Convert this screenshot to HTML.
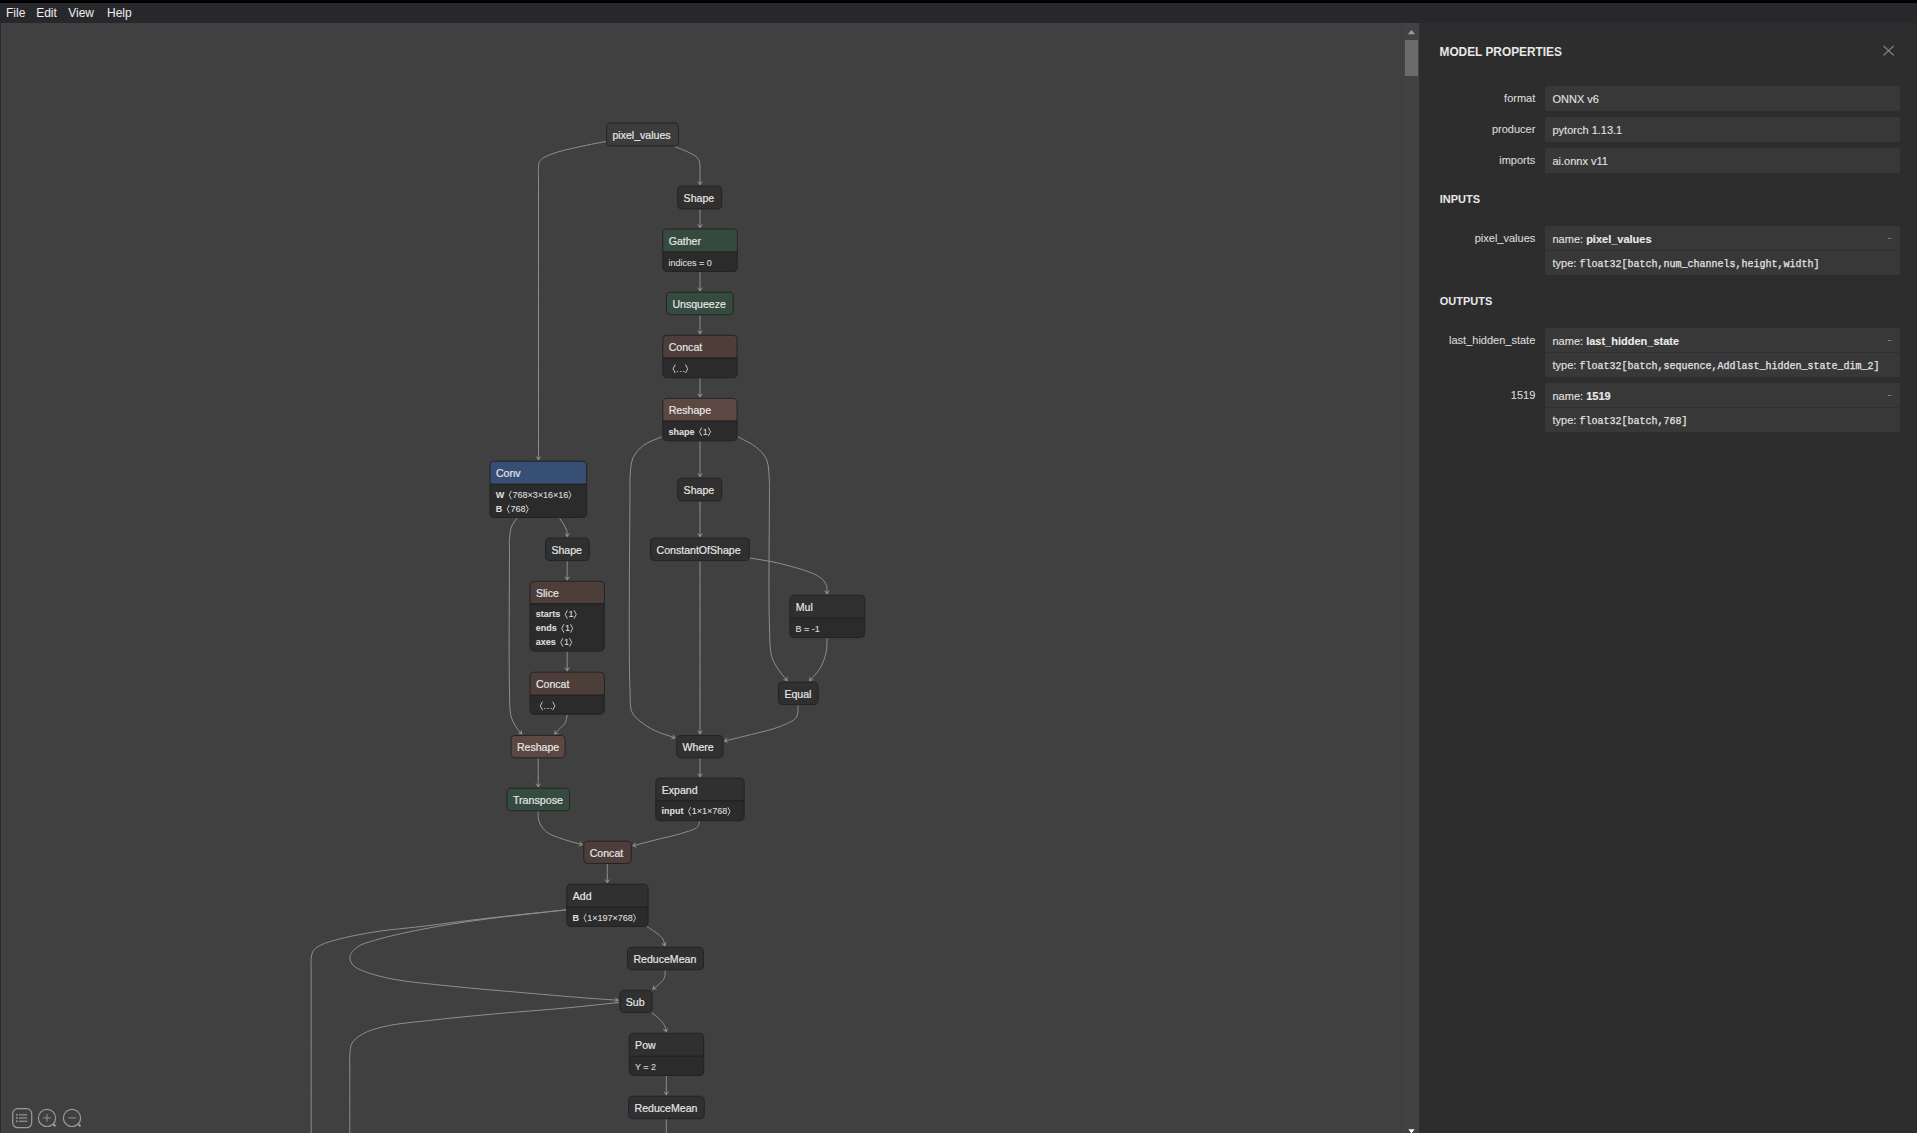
<!DOCTYPE html>
<html><head><meta charset="utf-8">
<style>
html,body{margin:0;padding:0;background:#404040;}
body{width:1917px;height:1133px;overflow:hidden;position:relative;font-family:"Liberation Sans",sans-serif;}
svg{position:absolute;left:0;top:0;}
text{font-family:"Liberation Sans",sans-serif;}
.nl{font-size:11px;fill:#e8e8e8;stroke:#e8e8e8;stroke-width:0.18px;}
.at{font-size:9px;fill:#dcdcdc;stroke:#dcdcdc;stroke-width:0.12px;}
.br{fill:none;stroke:#d4d4d4;stroke-width:0.9;}
.e{fill:none;stroke:#8e8e8e;stroke-width:1;}
.ah{fill:#8e8e8e;}
.mn{font-size:12px;fill:#f0f0f0;}
.st{font-size:12px;font-weight:bold;fill:#e8e8e8;}
.sh{font-size:11px;font-weight:bold;fill:#e8e8e8;}
.lb{font-size:11px;fill:#d8d8d8;stroke:#d8d8d8;stroke-width:0.12px;text-anchor:end;}
.vl{font-size:11px;fill:#e0e0e0;stroke:#e0e0e0;stroke-width:0.12px;}
.vb{font-weight:bold;fill:#ececec;}
.mo{font-family:"Liberation Mono",monospace;font-size:10px;fill:#e4e4e4;stroke:#e4e4e4;stroke-width:0.25px;}
.ex{font-family:"Liberation Mono",monospace;font-size:10px;fill:#8a8a8a;}
</style></head><body>
<svg width="1917" height="1133" viewBox="0 0 1917 1133">
<rect x="0" y="0" width="1917" height="1133" fill="#404040"/>
<g id="edges">
<path d="M606.00,141.50 C599.43,142.77 593.43,143.78 586.30,145.30 C577.75,147.13 565.89,149.48 558.20,151.90 C552.62,153.65 547.38,155.48 544.10,157.50 C542.04,158.77 540.53,159.88 539.60,161.50 C538.70,163.06 538.73,164.70 538.50,167.00 C538.13,170.76 538.50,173.91 538.50,182.00 C538.50,216.18 538.50,423.82 538.50,450.00 C538.50,454.49 538.50,455.27 538.50,457.90" class="e"/>
<path d="M-4.6,-3.0 L0,0 L-4.6,3.0 L-2.8,0 Z" transform="translate(538.50,460.70) rotate(90.00)" class="ah"/>
<path d="M674.10,146.30 C679.27,148.47 685.43,150.64 689.60,152.80 C692.63,154.37 695.44,155.77 697.10,157.50 C698.30,158.75 698.91,160.00 699.40,161.50 C699.93,163.14 699.89,164.94 700.00,167.00 C700.14,169.63 700.00,173.22 700.00,176.00 C700.00,178.40 700.00,180.47 700.00,182.70" class="e"/>
<path d="M-4.6,-3.0 L0,0 L-4.6,3.0 L-2.8,0 Z" transform="translate(700.00,185.50) rotate(90.00)" class="ah"/>
<path d="M700.00,209.50 C700.00,213.00 700.00,217.03 700.00,220.00 C700.00,222.19 700.00,223.80 700.00,225.70" class="e"/>
<path d="M-4.6,-3.0 L0,0 L-4.6,3.0 L-2.8,0 Z" transform="translate(700.00,228.50) rotate(90.00)" class="ah"/>
<path d="M700.00,272.00 C700.00,275.67 700.00,279.90 700.00,283.00 C700.00,285.27 700.00,286.93 700.00,288.90" class="e"/>
<path d="M-4.6,-3.0 L0,0 L-4.6,3.0 L-2.8,0 Z" transform="translate(700.00,291.70) rotate(90.00)" class="ah"/>
<path d="M700.00,315.30 C700.00,318.87 700.00,322.95 700.00,326.00 C700.00,328.29 700.00,330.00 700.00,332.00" class="e"/>
<path d="M-4.6,-3.0 L0,0 L-4.6,3.0 L-2.8,0 Z" transform="translate(700.00,334.80) rotate(90.00)" class="ah"/>
<path d="M700.00,378.30 C700.00,381.87 700.00,385.95 700.00,389.00 C700.00,391.29 700.00,393.00 700.00,395.00" class="e"/>
<path d="M-4.6,-3.0 L0,0 L-4.6,3.0 L-2.8,0 Z" transform="translate(700.00,397.80) rotate(90.00)" class="ah"/>
<path d="M700.00,441.30 C700.00,450.53 700.00,463.20 700.00,469.00 C700.00,471.65 700.00,472.87 700.00,474.80" class="e"/>
<path d="M-4.6,-3.0 L0,0 L-4.6,3.0 L-2.8,0 Z" transform="translate(700.00,477.60) rotate(90.00)" class="ah"/>
<path d="M700.00,501.40 C700.00,510.60 700.00,523.25 700.00,529.00 C700.00,531.61 700.00,532.80 700.00,534.70" class="e"/>
<path d="M-4.6,-3.0 L0,0 L-4.6,3.0 L-2.8,0 Z" transform="translate(700.00,537.50) rotate(90.00)" class="ah"/>
<path d="M700.00,561.20 C700.00,616.13 700.00,708.27 700.00,726.00 C700.00,729.41 700.00,730.07 700.00,732.10" class="e"/>
<path d="M-4.6,-3.0 L0,0 L-4.6,3.0 L-2.8,0 Z" transform="translate(700.00,734.90) rotate(90.00)" class="ah"/>
<path d="M700.00,758.30 C700.00,761.87 700.00,765.96 700.00,769.00 C700.00,771.26 700.00,772.93 700.00,774.90" class="e"/>
<path d="M-4.6,-3.0 L0,0 L-4.6,3.0 L-2.8,0 Z" transform="translate(700.00,777.70) rotate(90.00)" class="ah"/>
<path d="M661.80,436.70 C655.70,439.60 648.43,441.62 643.50,445.40 C639.11,448.77 635.35,452.73 633.10,457.60 C630.66,462.89 630.58,470.53 630.10,476.30 C629.69,481.20 630.03,482.76 630.00,490.00 C629.90,517.66 628.43,656.64 630.00,690.00 C630.52,701.16 629.61,706.69 632.10,712.30 C634.01,716.60 637.43,719.06 641.00,722.00 C645.06,725.34 650.28,728.40 655.50,730.90 C660.99,733.53 667.34,735.14 673.26,737.26" class="e"/>
<path d="M-4.6,-3.0 L0,0 L-4.6,3.0 L-2.8,0 Z" transform="translate(675.90,738.20) rotate(19.69)" class="ah"/>
<path d="M737.80,436.70 C743.93,440.20 751.23,443.07 756.20,447.20 C760.51,450.79 764.28,454.37 766.50,459.40 C769.09,465.28 768.86,474.57 769.30,481.00 C769.65,486.16 769.37,487.97 769.40,495.00 C769.48,516.41 768.36,596.45 769.40,625.00 C769.91,639.05 769.51,648.44 771.70,656.40 C773.16,661.72 775.56,665.13 778.00,669.00 C780.34,672.71 783.32,675.80 785.97,679.19" class="e"/>
<path d="M-4.6,-3.0 L0,0 L-4.6,3.0 L-2.8,0 Z" transform="translate(787.70,681.40) rotate(51.97)" class="ah"/>
<path d="M749.50,558.00 C756.10,559.07 762.55,559.86 769.30,561.20 C776.47,562.62 784.01,564.33 791.30,566.40 C798.68,568.49 807.60,571.03 813.30,573.70 C817.26,575.55 820.50,577.18 822.80,579.60 C824.78,581.69 826.18,584.61 826.80,586.90 C827.28,588.69 826.89,590.30 826.93,592.00" class="e"/>
<path d="M-4.6,-3.0 L0,0 L-4.6,3.0 L-2.8,0 Z" transform="translate(827.00,594.80) rotate(88.55)" class="ah"/>
<path d="M827.10,638.30 C826.80,642.80 827.17,647.17 826.20,651.80 C825.11,657.00 823.11,663.21 820.40,667.90 C817.88,672.27 814.00,675.47 810.81,679.26" class="e"/>
<path d="M-4.6,-3.0 L0,0 L-4.6,3.0 L-2.8,0 Z" transform="translate(809.00,681.40) rotate(130.18)" class="ah"/>
<path d="M798.10,705.30 C797.53,709.27 798.64,713.90 796.40,717.20 C793.62,721.30 786.63,723.76 780.30,726.40 C772.28,729.75 760.89,731.96 751.60,734.40 C742.90,736.68 734.68,738.55 726.22,740.63" class="e"/>
<path d="M-4.6,-3.0 L0,0 L-4.6,3.0 L-2.8,0 Z" transform="translate(723.50,741.30) rotate(166.20)" class="ah"/>
<path d="M699.60,821.30 C698.90,823.20 699.12,825.34 697.50,827.00 C694.76,829.81 687.47,831.44 681.40,833.40 C673.86,835.83 663.64,837.82 655.50,839.90 C648.21,841.76 641.71,843.50 634.81,845.29" class="e"/>
<path d="M-4.6,-3.0 L0,0 L-4.6,3.0 L-2.8,0 Z" transform="translate(632.10,846.00) rotate(165.39)" class="ah"/>
<path d="M517.00,518.20 C515.27,520.80 513.04,522.95 511.80,526.00 C510.36,529.55 509.87,534.40 509.50,538.50 C509.14,542.40 509.50,544.04 509.50,550.00 C509.50,570.79 508.73,662.13 509.50,690.00 C509.83,701.88 509.34,708.77 510.90,715.40 C511.98,719.97 513.87,723.45 515.70,726.50 C517.17,728.95 518.94,730.57 520.56,732.61" class="e"/>
<path d="M-4.6,-3.0 L0,0 L-4.6,3.0 L-2.8,0 Z" transform="translate(522.30,734.80) rotate(51.51)" class="ah"/>
<path d="M559.70,518.40 C561.33,520.93 563.32,523.56 564.60,526.00 C565.69,528.07 566.76,530.37 567.10,532.00 C567.32,533.05 567.13,533.80 567.15,534.70" class="e"/>
<path d="M-4.6,-3.0 L0,0 L-4.6,3.0 L-2.8,0 Z" transform="translate(567.20,537.50) rotate(88.96)" class="ah"/>
<path d="M567.20,561.20 C567.20,564.80 567.20,568.93 567.20,572.00 C567.20,574.29 567.20,576.00 567.20,578.00" class="e"/>
<path d="M-4.6,-3.0 L0,0 L-4.6,3.0 L-2.8,0 Z" transform="translate(567.20,580.80) rotate(90.00)" class="ah"/>
<path d="M567.20,651.60 C567.20,655.40 567.20,659.82 567.20,663.00 C567.20,665.29 567.20,666.93 567.20,668.90" class="e"/>
<path d="M-4.6,-3.0 L0,0 L-4.6,3.0 L-2.8,0 Z" transform="translate(567.20,671.70) rotate(90.00)" class="ah"/>
<path d="M567.30,714.90 C566.50,717.73 566.34,720.94 564.90,723.40 C563.45,725.87 560.23,727.96 558.60,729.70 C557.51,730.86 556.84,731.70 555.95,732.70" class="e"/>
<path d="M-4.6,-3.0 L0,0 L-4.6,3.0 L-2.8,0 Z" transform="translate(554.10,734.80) rotate(131.42)" class="ah"/>
<path d="M538.20,758.30 C538.20,765.20 538.20,774.20 538.20,779.00 C538.20,781.56 538.20,782.93 538.20,784.90" class="e"/>
<path d="M-4.6,-3.0 L0,0 L-4.6,3.0 L-2.8,0 Z" transform="translate(538.20,787.70) rotate(90.00)" class="ah"/>
<path d="M538.20,811.30 C538.37,814.30 537.72,817.27 538.70,820.30 C539.88,823.96 542.32,828.39 545.80,831.40 C550.01,835.04 557.41,837.16 563.30,839.30 C568.98,841.37 574.77,842.53 580.50,844.14" class="e"/>
<path d="M-4.6,-3.0 L0,0 L-4.6,3.0 L-2.8,0 Z" transform="translate(583.20,844.90) rotate(15.72)" class="ah"/>
<path d="M607.30,864.00 C607.30,867.67 607.30,871.92 607.30,875.00 C607.30,877.24 607.30,878.87 607.30,880.80" class="e"/>
<path d="M-4.6,-3.0 L0,0 L-4.6,3.0 L-2.8,0 Z" transform="translate(607.30,883.60) rotate(90.00)" class="ah"/>
<path d="M566.30,909.80 C538.03,912.83 507.37,915.89 481.50,918.90 C459.62,921.45 439.22,924.33 421.00,926.50 C406.01,928.28 392.23,929.33 380.00,931.10 C370.01,932.54 360.70,934.30 352.90,935.90 C346.91,937.13 342.34,938.12 337.10,939.60 C331.77,941.11 325.38,942.77 321.20,944.90 C318.12,946.47 315.46,948.02 313.80,950.20 C312.32,952.14 311.79,954.32 311.30,957.00 C310.65,960.59 311.23,963.21 311.20,970.00 C311.11,994.55 311.20,1083.33 311.20,1140.00" class="e"/>
<path d="M566.30,909.80 C538.03,913.10 507.35,916.10 481.50,919.70 C459.60,922.75 439.66,925.81 421.00,929.50 C404.72,932.71 387.23,936.57 375.60,940.10 C368.11,942.37 361.94,943.63 357.50,946.90 C353.94,949.52 350.41,953.42 349.90,956.70 C349.47,959.49 351.05,962.80 353.00,965.10 C355.26,967.77 359.03,969.24 363.50,971.10 C370.34,973.95 379.82,976.50 390.80,978.70 C406.91,981.92 429.99,983.92 451.30,986.20 C475.08,988.74 502.83,990.91 526.90,993.00 C548.88,994.91 573.49,997.04 590.00,998.30 C600.65,999.11 607.54,999.51 616.31,1000.11" class="e"/>
<path d="M-4.6,-3.0 L0,0 L-4.6,3.0 L-2.8,0 Z" transform="translate(619.10,1000.30) rotate(3.93)" class="ah"/>
<path d="M646.90,926.60 C650.43,928.97 654.62,931.33 657.50,933.70 C659.77,935.57 661.96,937.35 663.10,939.30 C664.01,940.85 664.00,942.50 664.45,944.10" class="e"/>
<path d="M-4.6,-3.0 L0,0 L-4.6,3.0 L-2.8,0 Z" transform="translate(665.20,946.80) rotate(74.36)" class="ah"/>
<path d="M665.20,970.40 C664.97,972.77 665.33,975.38 664.50,977.50 C663.68,979.60 661.95,981.38 660.30,983.10 C658.56,984.91 656.28,986.39 654.27,988.03" class="e"/>
<path d="M-4.6,-3.0 L0,0 L-4.6,3.0 L-2.8,0 Z" transform="translate(652.10,989.80) rotate(140.75)" class="ah"/>
<path d="M619.10,1002.50 C601.70,1004.30 585.92,1006.12 566.90,1007.90 C544.04,1010.04 515.09,1012.01 491.30,1014.20 C470.00,1016.16 449.51,1018.12 430.80,1020.30 C414.57,1022.19 397.82,1023.43 385.40,1026.30 C376.42,1028.38 368.60,1030.55 362.70,1033.90 C358.19,1036.46 354.20,1039.41 352.10,1043.00 C350.22,1046.22 350.30,1050.09 349.90,1054.00 C349.45,1058.37 349.82,1061.52 349.80,1068.00 C349.75,1082.69 349.80,1116.00 349.80,1140.00" class="e"/>
<path d="M651.80,1012.80 C654.63,1015.13 657.99,1017.29 660.30,1019.80 C662.34,1022.03 664.38,1024.93 665.20,1026.90 C665.70,1028.10 665.59,1029.00 665.79,1030.05" class="e"/>
<path d="M-4.6,-3.0 L0,0 L-4.6,3.0 L-2.8,0 Z" transform="translate(666.30,1032.80) rotate(79.44)" class="ah"/>
<path d="M666.30,1076.00 C666.30,1079.67 666.30,1083.90 666.30,1087.00 C666.30,1089.27 666.30,1090.93 666.30,1092.90" class="e"/>
<path d="M-4.6,-3.0 L0,0 L-4.6,3.0 L-2.8,0 Z" transform="translate(666.30,1095.70) rotate(90.00)" class="ah"/>
<path d="M666.30,1119.20 L666.30,1140.00" class="e"/>
</g>
<g id="nodes">
<path d="M611,123 L674,123 Q678.5,123 678.5,127.5 L678.5,141.5 Q678.5,146 674,146 L611,146 Q606.5,146 606.5,141.5 L606.5,127.5 Q606.5,123 611,123 Z" fill="#3c3c3c" stroke="#232323"/>
<text x="612.40" y="139.00" class="nl" textLength="58.24" lengthAdjust="spacingAndGlyphs">pixel_values</text>
<path d="M682.2,186 L717.2,186 Q721.7,186 721.7,190.5 L721.7,204.5 Q721.7,209 717.2,209 L682.2,209 Q677.7,209 677.7,204.5 L677.7,190.5 Q677.7,186 682.2,186 Z" fill="#303030" stroke="#232323"/>
<text x="683.60" y="202.00" class="nl" textLength="30.60" lengthAdjust="spacingAndGlyphs">Shape</text>
<path d="M667.3,229 L732.8,229 Q737.3,229 737.3,233.5 L737.3,252 L662.8,252 L662.8,233.5 Q662.8,229 667.3,229 Z" fill="#364b40"/>
<path d="M662.8,252 L737.3,252 L737.3,267 Q737.3,271.5 732.8,271.5 L667.3,271.5 Q662.8,271.5 662.8,267 L662.8,252 Z" fill="#2b2b2b"/>
<path d="M667.3,229 L732.8,229 Q737.3,229 737.3,233.5 L737.3,267 Q737.3,271.5 732.8,271.5 L667.3,271.5 Q662.8,271.5 662.8,267 L662.8,233.5 Q662.8,229 667.3,229 Z" fill="none" stroke="#232323"/>
<line x1="662.8" y1="252.0" x2="737.3" y2="252.0" stroke="#232323" stroke-width="1.6"/>
<text x="668.70" y="245.00" class="nl" textLength="32.35" lengthAdjust="spacingAndGlyphs">Gather</text>
<g transform="translate(668.50,265.50)">
<text x="0.00" y="0" class="at">indices = 0</text>
</g>
<path d="M671,292.2 L728.7,292.2 Q733.2,292.2 733.2,296.7 L733.2,310.3 Q733.2,314.8 728.7,314.8 L671,314.8 Q666.5,314.8 666.5,310.3 L666.5,296.7 Q666.5,292.2 671,292.2 Z" fill="#364b40" stroke="#232323"/>
<text x="672.40" y="308.20" class="nl" textLength="53.54" lengthAdjust="spacingAndGlyphs">Unsqueeze</text>
<path d="M667.3,335.3 L732.6,335.3 Q737.1,335.3 737.1,339.8 L737.1,358.1 L662.8,358.1 L662.8,339.8 Q662.8,335.3 667.3,335.3 Z" fill="#4d3e3a"/>
<path d="M662.8,358.1 L737.1,358.1 L737.1,373.3 Q737.1,377.8 732.6,377.8 L667.3,377.8 Q662.8,377.8 662.8,373.3 L662.8,358.1 Z" fill="#2b2b2b"/>
<path d="M667.3,335.3 L732.6,335.3 Q737.1,335.3 737.1,339.8 L737.1,373.3 Q737.1,377.8 732.6,377.8 L667.3,377.8 Q662.8,377.8 662.8,373.3 L662.8,339.8 Q662.8,335.3 667.3,335.3 Z" fill="none" stroke="#232323"/>
<line x1="662.8" y1="358.1" x2="737.1" y2="358.1" stroke="#232323" stroke-width="1.6"/>
<text x="668.70" y="351.30" class="nl" textLength="33.53" lengthAdjust="spacingAndGlyphs">Concat</text>
<g transform="translate(668.50,371.60)">
<path d="M6.80,-7 L4.60,-2.8 L6.80,1.4" class="br"/>
<text x="7.80" y="0" class="at" letter-spacing="0.6">...</text>
<path d="M17.00,-7 L19.20,-2.8 L17.00,1.4" class="br"/>
</g>
<path d="M667.3,398.3 L732.6,398.3 Q737.1,398.3 737.1,402.8 L737.1,421.1 L662.8,421.1 L662.8,402.8 Q662.8,398.3 667.3,398.3 Z" fill="#5b4843"/>
<path d="M662.8,421.1 L737.1,421.1 L737.1,436.3 Q737.1,440.8 732.6,440.8 L667.3,440.8 Q662.8,440.8 662.8,436.3 L662.8,421.1 Z" fill="#2b2b2b"/>
<path d="M667.3,398.3 L732.6,398.3 Q737.1,398.3 737.1,402.8 L737.1,436.3 Q737.1,440.8 732.6,440.8 L667.3,440.8 Q662.8,440.8 662.8,436.3 L662.8,402.8 Q662.8,398.3 667.3,398.3 Z" fill="none" stroke="#232323"/>
<line x1="662.8" y1="421.1" x2="737.1" y2="421.1" stroke="#232323" stroke-width="1.6"/>
<text x="668.70" y="414.30" class="nl" textLength="42.36" lengthAdjust="spacingAndGlyphs">Reshape</text>
<g transform="translate(668.50,434.60)">
<text x="0" y="0" class="at"><tspan font-weight="bold">shape</tspan></text>
<path d="M33.21,-7 L31.01,-2.8 L33.21,1.4" class="br"/>
<text x="34.21" y="0" class="at">1</text>
<path d="M39.82,-7 L42.02,-2.8 L39.82,1.4" class="br"/>
</g>
<path d="M494.5,461.2 L582.2,461.2 Q586.7,461.2 586.7,465.7 L586.7,484.3 L490,484.3 L490,465.7 Q490,461.2 494.5,461.2 Z" fill="#384f75"/>
<path d="M490,484.3 L586.7,484.3 L586.7,513 Q586.7,517.5 582.2,517.5 L494.5,517.5 Q490,517.5 490,513 L490,484.3 Z" fill="#2b2b2b"/>
<path d="M494.5,461.2 L582.2,461.2 Q586.7,461.2 586.7,465.7 L586.7,513 Q586.7,517.5 582.2,517.5 L494.5,517.5 Q490,517.5 490,513 L490,465.7 Q490,461.2 494.5,461.2 Z" fill="none" stroke="#232323"/>
<line x1="490.0" y1="484.3" x2="586.7" y2="484.3" stroke="#232323" stroke-width="1.6"/>
<text x="495.90" y="477.20" class="nl" textLength="24.70" lengthAdjust="spacingAndGlyphs">Conv</text>
<g transform="translate(495.70,497.80)">
<text x="0" y="0" class="at"><tspan font-weight="bold">W</tspan></text>
<path d="M15.69,-7 L13.49,-2.8 L15.69,1.4" class="br"/>
<text x="16.69" y="0" class="at">768×3×16×16</text>
<path d="M73.11,-7 L75.31,-2.8 L73.11,1.4" class="br"/>
</g>
<g transform="translate(495.70,511.80)">
<text x="0" y="0" class="at"><tspan font-weight="bold">B</tspan></text>
<path d="M13.70,-7 L11.50,-2.8 L13.70,1.4" class="br"/>
<text x="14.70" y="0" class="at">768</text>
<path d="M30.32,-7 L32.52,-2.8 L30.32,1.4" class="br"/>
</g>
<path d="M682.2,478.1 L717.2,478.1 Q721.7,478.1 721.7,482.6 L721.7,496.4 Q721.7,500.9 717.2,500.9 L682.2,500.9 Q677.7,500.9 677.7,496.4 L677.7,482.6 Q677.7,478.1 682.2,478.1 Z" fill="#303030" stroke="#232323"/>
<text x="683.60" y="494.10" class="nl" textLength="30.60" lengthAdjust="spacingAndGlyphs">Shape</text>
<path d="M550,538 L584.7,538 Q589.2,538 589.2,542.5 L589.2,556.2 Q589.2,560.7 584.7,560.7 L550,560.7 Q545.5,560.7 545.5,556.2 L545.5,542.5 Q545.5,538 550,538 Z" fill="#303030" stroke="#232323"/>
<text x="551.40" y="554.00" class="nl" textLength="30.60" lengthAdjust="spacingAndGlyphs">Shape</text>
<path d="M655.1,538 L744.9,538 Q749.4,538 749.4,542.5 L749.4,556.2 Q749.4,560.7 744.9,560.7 L655.1,560.7 Q650.6,560.7 650.6,556.2 L650.6,542.5 Q650.6,538 655.1,538 Z" fill="#303030" stroke="#232323"/>
<text x="656.50" y="554.00" class="nl" textLength="84.12" lengthAdjust="spacingAndGlyphs">ConstantOfShape</text>
<path d="M534.5,581.3 L599.9,581.3 Q604.4,581.3 604.4,585.8 L604.4,603.7 L530,603.7 L530,585.8 Q530,581.3 534.5,581.3 Z" fill="#4d3e3a"/>
<path d="M530,603.7 L604.4,603.7 L604.4,646.6 Q604.4,651.1 599.9,651.1 L534.5,651.1 Q530,651.1 530,646.6 L530,603.7 Z" fill="#2b2b2b"/>
<path d="M534.5,581.3 L599.9,581.3 Q604.4,581.3 604.4,585.8 L604.4,646.6 Q604.4,651.1 599.9,651.1 L534.5,651.1 Q530,651.1 530,646.6 L530,585.8 Q530,581.3 534.5,581.3 Z" fill="none" stroke="#232323"/>
<line x1="530.0" y1="603.7" x2="604.4" y2="603.7" stroke="#232323" stroke-width="1.6"/>
<text x="535.90" y="597.30" class="nl" textLength="22.94" lengthAdjust="spacingAndGlyphs">Slice</text>
<g transform="translate(535.70,617.20)">
<text x="0" y="0" class="at"><tspan font-weight="bold">starts</tspan></text>
<path d="M31.71,-7 L29.51,-2.8 L31.71,1.4" class="br"/>
<text x="32.71" y="0" class="at">1</text>
<path d="M38.32,-7 L40.52,-2.8 L38.32,1.4" class="br"/>
</g>
<g transform="translate(535.70,631.20)">
<text x="0" y="0" class="at"><tspan font-weight="bold">ends</tspan></text>
<path d="M28.21,-7 L26.01,-2.8 L28.21,1.4" class="br"/>
<text x="29.21" y="0" class="at">1</text>
<path d="M34.81,-7 L37.01,-2.8 L34.81,1.4" class="br"/>
</g>
<g transform="translate(535.70,645.20)">
<text x="0" y="0" class="at"><tspan font-weight="bold">axes</tspan></text>
<path d="M27.22,-7 L25.02,-2.8 L27.22,1.4" class="br"/>
<text x="28.22" y="0" class="at">1</text>
<path d="M33.83,-7 L36.03,-2.8 L33.83,1.4" class="br"/>
</g>
<path d="M794.4,595.3 L860.2,595.3 Q864.7,595.3 864.7,599.8 L864.7,618 L789.9,618 L789.9,599.8 Q789.9,595.3 794.4,595.3 Z" fill="#303030"/>
<path d="M789.9,618 L864.7,618 L864.7,633.1 Q864.7,637.6 860.2,637.6 L794.4,637.6 Q789.9,637.6 789.9,633.1 L789.9,618 Z" fill="#2b2b2b"/>
<path d="M794.4,595.3 L860.2,595.3 Q864.7,595.3 864.7,599.8 L864.7,633.1 Q864.7,637.6 860.2,637.6 L794.4,637.6 Q789.9,637.6 789.9,633.1 L789.9,599.8 Q789.9,595.3 794.4,595.3 Z" fill="none" stroke="#232323"/>
<line x1="789.9" y1="618.0" x2="864.7" y2="618.0" stroke="#232323" stroke-width="1.6"/>
<text x="795.80" y="611.30" class="nl" textLength="17.05" lengthAdjust="spacingAndGlyphs">Mul</text>
<g transform="translate(795.60,631.50)">
<text x="0.00" y="0" class="at">B = -1</text>
</g>
<path d="M534.5,672.2 L599.9,672.2 Q604.4,672.2 604.4,676.7 L604.4,695.2 L530,695.2 L530,676.7 Q530,672.2 534.5,672.2 Z" fill="#4d3e3a"/>
<path d="M530,695.2 L604.4,695.2 L604.4,709.7 Q604.4,714.2 599.9,714.2 L534.5,714.2 Q530,714.2 530,709.7 L530,695.2 Z" fill="#2b2b2b"/>
<path d="M534.5,672.2 L599.9,672.2 Q604.4,672.2 604.4,676.7 L604.4,709.7 Q604.4,714.2 599.9,714.2 L534.5,714.2 Q530,714.2 530,709.7 L530,676.7 Q530,672.2 534.5,672.2 Z" fill="none" stroke="#232323"/>
<line x1="530.0" y1="695.2" x2="604.4" y2="695.2" stroke="#232323" stroke-width="1.6"/>
<text x="535.90" y="688.20" class="nl" textLength="33.53" lengthAdjust="spacingAndGlyphs">Concat</text>
<g transform="translate(535.70,708.70)">
<path d="M6.80,-7 L4.60,-2.8 L6.80,1.4" class="br"/>
<text x="7.80" y="0" class="at" letter-spacing="0.6">...</text>
<path d="M17.00,-7 L19.20,-2.8 L17.00,1.4" class="br"/>
</g>
<path d="M783,682.1 L813.6,682.1 Q818.1,682.1 818.1,686.6 L818.1,700.1 Q818.1,704.6 813.6,704.6 L783,704.6 Q778.5,704.6 778.5,700.1 L778.5,686.6 Q778.5,682.1 783,682.1 Z" fill="#303030" stroke="#232323"/>
<text x="784.40" y="698.10" class="nl" textLength="27.06" lengthAdjust="spacingAndGlyphs">Equal</text>
<path d="M515.5,735.4 L560.6,735.4 Q565.1,735.4 565.1,739.9 L565.1,753.3 Q565.1,757.8 560.6,757.8 L515.5,757.8 Q511,757.8 511,753.3 L511,739.9 Q511,735.4 515.5,735.4 Z" fill="#5b4843" stroke="#232323"/>
<text x="516.90" y="751.40" class="nl" textLength="42.36" lengthAdjust="spacingAndGlyphs">Reshape</text>
<path d="M681.2,735.4 L718.5,735.4 Q723,735.4 723,739.9 L723,753.3 Q723,757.8 718.5,757.8 L681.2,757.8 Q676.7,757.8 676.7,753.3 L676.7,739.9 Q676.7,735.4 681.2,735.4 Z" fill="#303030" stroke="#232323"/>
<text x="682.60" y="751.40" class="nl" textLength="31.17" lengthAdjust="spacingAndGlyphs">Where</text>
<path d="M511.5,788.2 L565.2,788.2 Q569.7,788.2 569.7,792.7 L569.7,806.3 Q569.7,810.8 565.2,810.8 L511.5,810.8 Q507,810.8 507,806.3 L507,792.7 Q507,788.2 511.5,788.2 Z" fill="#364b40" stroke="#232323"/>
<text x="512.90" y="804.20" class="nl" textLength="50.00" lengthAdjust="spacingAndGlyphs">Transpose</text>
<path d="M660.3,778.2 L739.7,778.2 Q744.2,778.2 744.2,782.7 L744.2,800.7 L655.8,800.7 L655.8,782.7 Q655.8,778.2 660.3,778.2 Z" fill="#303030"/>
<path d="M655.8,800.7 L744.2,800.7 L744.2,816.2 Q744.2,820.7 739.7,820.7 L660.3,820.7 Q655.8,820.7 655.8,816.2 L655.8,800.7 Z" fill="#2b2b2b"/>
<path d="M660.3,778.2 L739.7,778.2 Q744.2,778.2 744.2,782.7 L744.2,816.2 Q744.2,820.7 739.7,820.7 L660.3,820.7 Q655.8,820.7 655.8,816.2 L655.8,782.7 Q655.8,778.2 660.3,778.2 Z" fill="none" stroke="#232323"/>
<line x1="655.8" y1="800.7" x2="744.2" y2="800.7" stroke="#232323" stroke-width="1.6"/>
<text x="661.70" y="794.20" class="nl" textLength="35.89" lengthAdjust="spacingAndGlyphs">Expand</text>
<g transform="translate(661.50,814.20)">
<text x="0" y="0" class="at"><tspan font-weight="bold">input</tspan></text>
<path d="M29.19,-7 L26.99,-2.8 L29.19,1.4" class="br"/>
<text x="30.19" y="0" class="at">1×1×768</text>
<path d="M66.33,-7 L68.53,-2.8 L66.33,1.4" class="br"/>
</g>
<path d="M588.3,841.2 L626.7,841.2 Q631.2,841.2 631.2,845.7 L631.2,859 Q631.2,863.5 626.7,863.5 L588.3,863.5 Q583.8,863.5 583.8,859 L583.8,845.7 Q583.8,841.2 588.3,841.2 Z" fill="#4d3e3a" stroke="#232323"/>
<text x="589.70" y="857.20" class="nl" textLength="33.53" lengthAdjust="spacingAndGlyphs">Concat</text>
<path d="M571.3,884.1 L643.6,884.1 Q648.1,884.1 648.1,888.6 L648.1,907.3 L566.8,907.3 L566.8,888.6 Q566.8,884.1 571.3,884.1 Z" fill="#303030"/>
<path d="M566.8,907.3 L648.1,907.3 L648.1,922 Q648.1,926.5 643.6,926.5 L571.3,926.5 Q566.8,926.5 566.8,922 L566.8,907.3 Z" fill="#2b2b2b"/>
<path d="M571.3,884.1 L643.6,884.1 Q648.1,884.1 648.1,888.6 L648.1,922 Q648.1,926.5 643.6,926.5 L571.3,926.5 Q566.8,926.5 566.8,922 L566.8,888.6 Q566.8,884.1 571.3,884.1 Z" fill="none" stroke="#232323"/>
<line x1="566.8" y1="907.3" x2="648.1" y2="907.3" stroke="#232323" stroke-width="1.6"/>
<text x="572.70" y="900.10" class="nl" textLength="18.83" lengthAdjust="spacingAndGlyphs">Add</text>
<g transform="translate(572.50,920.80)">
<text x="0" y="0" class="at"><tspan font-weight="bold">B</tspan></text>
<path d="M13.70,-7 L11.50,-2.8 L13.70,1.4" class="br"/>
<text x="14.70" y="0" class="at">1×197×768</text>
<path d="M60.85,-7 L63.05,-2.8 L60.85,1.4" class="br"/>
</g>
<path d="M632,947.3 L699,947.3 Q703.5,947.3 703.5,951.8 L703.5,965.2 Q703.5,969.7 699,969.7 L632,969.7 Q627.5,969.7 627.5,965.2 L627.5,951.8 Q627.5,947.3 632,947.3 Z" fill="#303030" stroke="#232323"/>
<text x="633.40" y="963.30" class="nl" textLength="62.94" lengthAdjust="spacingAndGlyphs">ReduceMean</text>
<path d="M624.4,990.3 L647.7,990.3 Q652.2,990.3 652.2,994.8 L652.2,1008 Q652.2,1012.5 647.7,1012.5 L624.4,1012.5 Q619.9,1012.5 619.9,1008 L619.9,994.8 Q619.9,990.3 624.4,990.3 Z" fill="#303030" stroke="#232323"/>
<text x="625.80" y="1006.30" class="nl" textLength="18.83" lengthAdjust="spacingAndGlyphs">Sub</text>
<path d="M633.7,1033.3 L699.2,1033.3 Q703.7,1033.3 703.7,1037.8 L703.7,1056.2 L629.2,1056.2 L629.2,1037.8 Q629.2,1033.3 633.7,1033.3 Z" fill="#303030"/>
<path d="M629.2,1056.2 L703.7,1056.2 L703.7,1071 Q703.7,1075.5 699.2,1075.5 L633.7,1075.5 Q629.2,1075.5 629.2,1071 L629.2,1056.2 Z" fill="#2b2b2b"/>
<path d="M633.7,1033.3 L699.2,1033.3 Q703.7,1033.3 703.7,1037.8 L703.7,1071 Q703.7,1075.5 699.2,1075.5 L633.7,1075.5 Q629.2,1075.5 629.2,1071 L629.2,1037.8 Q629.2,1033.3 633.7,1033.3 Z" fill="none" stroke="#232323"/>
<line x1="629.2" y1="1056.2" x2="703.7" y2="1056.2" stroke="#232323" stroke-width="1.6"/>
<text x="635.10" y="1049.30" class="nl" textLength="20.59" lengthAdjust="spacingAndGlyphs">Pow</text>
<g transform="translate(634.90,1069.70)">
<text x="0.00" y="0" class="at">Y = 2</text>
</g>
<path d="M633.1,1096.2 L699.8,1096.2 Q704.3,1096.2 704.3,1100.7 L704.3,1114.2 Q704.3,1118.7 699.8,1118.7 L633.1,1118.7 Q628.6,1118.7 628.6,1114.2 L628.6,1100.7 Q628.6,1096.2 633.1,1096.2 Z" fill="#303030" stroke="#232323"/>
<text x="634.50" y="1112.20" class="nl" textLength="62.94" lengthAdjust="spacingAndGlyphs">ReduceMean</text>
</g>
<rect x="0" y="23" width="1" height="1110" fill="#2a2a2a"/>
<rect x="0" y="0" width="1917" height="3" fill="#000"/>
<rect x="0" y="3" width="1917" height="20" fill="#27282c"/>
<text x="6" y="17" class="mn">File</text>
<text x="36.2" y="17" class="mn">Edit</text>
<text x="68.2" y="17" class="mn">View</text>
<text x="107" y="17" class="mn">Help</text>

<rect x="1403" y="23" width="16" height="1110" fill="#424242"/>
<rect x="1405" y="40" width="13" height="36" fill="#6b6b6b"/>
<path d="M7.8,34.2 L11.45,29.9 L15.1,34.2 Z" transform="translate(1400,0)" fill="#9a9a9a"/>
<path d="M1407.6,1128.8 L1415.4,1128.8 L1411.5,1134 Z" fill="#ffffff" stroke="#1a1a1a" stroke-width="0.7"/>

<g transform="translate(8,1104)">
 <rect x="4.7" y="4.7" width="19" height="19" rx="5" fill="none" stroke="#9a9a9a" stroke-width="1.2"/>
 <rect x="8" y="9.9" width="1.8" height="1.8" fill="#8a8a8a"/><rect x="11" y="10.1" width="8.2" height="1.4" fill="#8a8a8a"/>
 <rect x="8" y="13.1" width="1.8" height="1.8" fill="#8a8a8a"/><rect x="11" y="13.3" width="8.2" height="1.4" fill="#8a8a8a"/>
 <rect x="8" y="16.4" width="1.8" height="1.8" fill="#8a8a8a"/><rect x="11" y="16.6" width="8.2" height="1.4" fill="#8a8a8a"/>
 <circle cx="39" cy="13.9" r="8.6" fill="none" stroke="#9a9a9a" stroke-width="1.2"/>
 <line x1="35.2" y1="13.9" x2="43" y2="13.9" stroke="#8a8a8a" stroke-width="1.1"/><line x1="39" y1="10.1" x2="39" y2="17.7" stroke="#8a8a8a" stroke-width="1.1"/>
 <line x1="45" y1="20" x2="47.5" y2="22.3" stroke="#9a9a9a" stroke-width="2"/>
 <circle cx="64" cy="13.9" r="8.6" fill="none" stroke="#9a9a9a" stroke-width="1.2"/>
 <line x1="60.2" y1="13.9" x2="68" y2="13.9" stroke="#8a8a8a" stroke-width="1.1"/>
 <line x1="70" y1="20" x2="72.5" y2="22.3" stroke="#9a9a9a" stroke-width="2"/>
</g>

<rect x="1419" y="23" width="498" height="1110" fill="#2d2d2d"/>
<text x="1439.5" y="56.2" class="st" textLength="122.4" lengthAdjust="spacingAndGlyphs">MODEL PROPERTIES</text>
<path d="M1883.5,45.8 L1893.8,55.3 M1893.8,45.8 L1883.5,55.3" stroke="#8c8c8c" stroke-width="1.15"/>

<text x="1535.3" y="102" class="lb">format</text>
<rect x="1545" y="86" width="355" height="25" rx="2" fill="#383838"/>
<text x="1552.5" y="102.8" class="vl">ONNX v6</text>
<text x="1535.3" y="133" class="lb">producer</text>
<rect x="1545" y="117" width="355" height="25" rx="2" fill="#383838"/>
<text x="1552.5" y="133.8" class="vl">pytorch 1.13.1</text>
<text x="1535.3" y="164" class="lb">imports</text>
<rect x="1545" y="148" width="355" height="25" rx="2" fill="#383838"/>
<text x="1552.5" y="164.8" class="vl">ai.onnx v11</text>

<text x="1439.7" y="202.9" class="sh">INPUTS</text>
<text x="1535.3" y="241.9" class="lb">pixel_values</text>
<rect x="1545" y="226" width="355" height="49" rx="2" fill="#383838"/>
<rect x="1545" y="250" width="355" height="1" fill="#303030"/>
<text x="1552.5" y="242.5" class="vl">name: <tspan class="vb">pixel_values</tspan></text>
<text x="1886.5" y="240.5" class="ex">-</text>
<text x="1552.5" y="266.5" class="vl">type: <tspan class="mo">float32[batch,num_channels,height,width]</tspan></text>

<text x="1439.7" y="304.9" class="sh">OUTPUTS</text>
<text x="1535.3" y="343.9" class="lb">last_hidden_state</text>
<rect x="1545" y="328" width="355" height="49" rx="2" fill="#383838"/>
<rect x="1545" y="352" width="355" height="1" fill="#303030"/>
<text x="1552.5" y="344.5" class="vl">name: <tspan class="vb">last_hidden_state</tspan></text>
<text x="1886.5" y="342.5" class="ex">-</text>
<text x="1552.5" y="368.5" class="vl">type: <tspan class="mo">float32[batch,sequence,Addlast_hidden_state_dim_2]</tspan></text>

<text x="1535.3" y="398.9" class="lb">1519</text>
<rect x="1545" y="383" width="355" height="49" rx="2" fill="#383838"/>
<rect x="1545" y="407" width="355" height="1" fill="#303030"/>
<text x="1552.5" y="399.5" class="vl">name: <tspan class="vb">1519</tspan></text>
<text x="1886.5" y="397.5" class="ex">-</text>
<text x="1552.5" y="423.5" class="vl">type: <tspan class="mo">float32[batch,768]</tspan></text>
</svg>
</body></html>
